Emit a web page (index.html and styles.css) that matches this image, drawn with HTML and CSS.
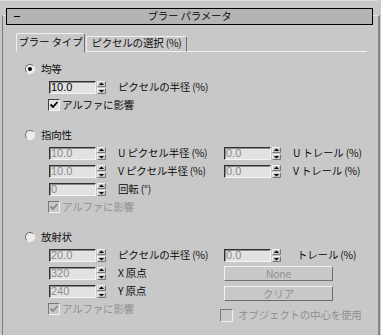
FILE: index.html
```html
<!DOCTYPE html>
<html lang="ja">
<head>
  <meta charset="UTF-8" />
  <title>ブラー パラメータ</title>
  <link rel="stylesheet" href="styles.css">
</head>
<body>

  <div class="top-edge"></div>

  <div class="rollout">
    <div class="rollout-title">
      <span class="collapse"></span>
      <span class="title-text">ブラー パラメータ</span>
    </div>

    <div class="tabs">
      <div class="tab active">ブラー タイプ</div>
      <div class="tab">ピクセルの選択 (%)</div>
      <div class="tab-fill"></div>
    </div>

    <div class="pane">

      <!-- 均等 -->
      <div class="section">
        <div class="radio-row"><span class="radio checked"></span>均等</div>
        <div class="row">
          <div class="col">
            <span class="field">10.0</span>
            <svg class="spin" width="9" height="13" viewBox="0 0 9 13"><path d="M.5 5.5V.5h8" stroke="#f4f4f4" fill="none"/><path d="M.5 5.5h8v-5" stroke="#777" fill="none"/><path d="M2 4h5L4.5 1.5z"/><path d="M.5 12.5v-5h8" stroke="#f4f4f4" fill="none"/><path d="M.5 12.5h8v-5" stroke="#777" fill="none"/><path d="M2 9h5l-2.5 2.5z"/></svg>
            <span class="lbl">ピクセルの半径 (%)</span>
          </div>
        </div>
        <div class="check-row">
          <div class="check-item">
            <span class="check"><svg width="10" height="10" viewBox="0 0 10 10"><path d="M1.5 4.5l2.5 2.5 4.5-5" stroke="#000" stroke-width="1.8" fill="none"/></svg></span>
            アルファに影響
          </div>
        </div>
      </div>

      <!-- 指向性 -->
      <div class="section">
        <div class="radio-row"><span class="radio"></span>指向性</div>
        <div class="row off">
          <div class="col">
            <span class="field">10.0</span>
            <svg class="spin" width="9" height="13" viewBox="0 0 9 13"><path d="M.5 5.5V.5h8" stroke="#f4f4f4" fill="none"/><path d="M.5 5.5h8v-5" stroke="#777" fill="none"/><path d="M2 4h5L4.5 1.5z"/><path d="M.5 12.5v-5h8" stroke="#f4f4f4" fill="none"/><path d="M.5 12.5h8v-5" stroke="#777" fill="none"/><path d="M2 9h5l-2.5 2.5z"/></svg>
            <span class="lbl">U ピクセル半径 (%)</span>
          </div>
          <div class="col">
            <span class="field">0.0</span>
            <svg class="spin" width="9" height="13" viewBox="0 0 9 13"><path d="M.5 5.5V.5h8" stroke="#f4f4f4" fill="none"/><path d="M.5 5.5h8v-5" stroke="#777" fill="none"/><path d="M2 4h5L4.5 1.5z"/><path d="M.5 12.5v-5h8" stroke="#f4f4f4" fill="none"/><path d="M.5 12.5h8v-5" stroke="#777" fill="none"/><path d="M2 9h5l-2.5 2.5z"/></svg>
            <span class="lbl">U トレール (%)</span>
          </div>
        </div>
        <div class="row off">
          <div class="col">
            <span class="field">10.0</span>
            <svg class="spin" width="9" height="13" viewBox="0 0 9 13"><path d="M.5 5.5V.5h8" stroke="#f4f4f4" fill="none"/><path d="M.5 5.5h8v-5" stroke="#777" fill="none"/><path d="M2 4h5L4.5 1.5z"/><path d="M.5 12.5v-5h8" stroke="#f4f4f4" fill="none"/><path d="M.5 12.5h8v-5" stroke="#777" fill="none"/><path d="M2 9h5l-2.5 2.5z"/></svg>
            <span class="lbl">V ピクセル半径 (%)</span>
          </div>
          <div class="col">
            <span class="field">0.0</span>
            <svg class="spin" width="9" height="13" viewBox="0 0 9 13"><path d="M.5 5.5V.5h8" stroke="#f4f4f4" fill="none"/><path d="M.5 5.5h8v-5" stroke="#777" fill="none"/><path d="M2 4h5L4.5 1.5z"/><path d="M.5 12.5v-5h8" stroke="#f4f4f4" fill="none"/><path d="M.5 12.5h8v-5" stroke="#777" fill="none"/><path d="M2 9h5l-2.5 2.5z"/></svg>
            <span class="lbl">V トレール (%)</span>
          </div>
        </div>
        <div class="row off">
          <div class="col">
            <span class="field">0</span>
            <svg class="spin" width="9" height="13" viewBox="0 0 9 13"><path d="M.5 5.5V.5h8" stroke="#f4f4f4" fill="none"/><path d="M.5 5.5h8v-5" stroke="#777" fill="none"/><path d="M2 4h5L4.5 1.5z"/><path d="M.5 12.5v-5h8" stroke="#f4f4f4" fill="none"/><path d="M.5 12.5h8v-5" stroke="#777" fill="none"/><path d="M2 9h5l-2.5 2.5z"/></svg>
            <span class="lbl">回転 (°)</span>
          </div>
        </div>
        <div class="check-row off">
          <div class="check-item">
            <span class="check"><svg width="10" height="10" viewBox="0 0 10 10"><path d="M1.5 4.5l2.5 2.5 4.5-5" stroke="#888" stroke-width="1.8" fill="none"/></svg></span>
            アルファに影響
          </div>
        </div>
      </div>

      <!-- 放射状 -->
      <div class="section">
        <div class="radio-row"><span class="radio"></span>放射状</div>
        <div class="row off">
          <div class="col">
            <span class="field">20.0</span>
            <svg class="spin" width="9" height="13" viewBox="0 0 9 13"><path d="M.5 5.5V.5h8" stroke="#f4f4f4" fill="none"/><path d="M.5 5.5h8v-5" stroke="#777" fill="none"/><path d="M2 4h5L4.5 1.5z"/><path d="M.5 12.5v-5h8" stroke="#f4f4f4" fill="none"/><path d="M.5 12.5h8v-5" stroke="#777" fill="none"/><path d="M2 9h5l-2.5 2.5z"/></svg>
            <span class="lbl">ピクセルの半径 (%)</span>
          </div>
          <div class="col">
            <span class="field">0.0</span>
            <svg class="spin" width="9" height="13" viewBox="0 0 9 13"><path d="M.5 5.5V.5h8" stroke="#f4f4f4" fill="none"/><path d="M.5 5.5h8v-5" stroke="#777" fill="none"/><path d="M2 4h5L4.5 1.5z"/><path d="M.5 12.5v-5h8" stroke="#f4f4f4" fill="none"/><path d="M.5 12.5h8v-5" stroke="#777" fill="none"/><path d="M2 9h5l-2.5 2.5z"/></svg>
            <span class="lbl trail">トレール (%)</span>
          </div>
        </div>
        <div class="row off">
          <div class="col">
            <span class="field">320</span>
            <svg class="spin" width="9" height="13" viewBox="0 0 9 13"><path d="M.5 5.5V.5h8" stroke="#f4f4f4" fill="none"/><path d="M.5 5.5h8v-5" stroke="#777" fill="none"/><path d="M2 4h5L4.5 1.5z"/><path d="M.5 12.5v-5h8" stroke="#f4f4f4" fill="none"/><path d="M.5 12.5h8v-5" stroke="#777" fill="none"/><path d="M2 9h5l-2.5 2.5z"/></svg>
            <span class="lbl">X 原点</span>
          </div>
          <div class="col">
            <span class="btn btn-none">None</span>
          </div>
        </div>
        <div class="row off">
          <div class="col">
            <span class="field">240</span>
            <svg class="spin" width="9" height="13" viewBox="0 0 9 13"><path d="M.5 5.5V.5h8" stroke="#f4f4f4" fill="none"/><path d="M.5 5.5h8v-5" stroke="#777" fill="none"/><path d="M2 4h5L4.5 1.5z"/><path d="M.5 12.5v-5h8" stroke="#f4f4f4" fill="none"/><path d="M.5 12.5h8v-5" stroke="#777" fill="none"/><path d="M2 9h5l-2.5 2.5z"/></svg>
            <span class="lbl">Y 原点</span>
          </div>
          <div class="col">
            <span class="btn btn-clear">クリア</span>
          </div>
        </div>
        <div class="check-row off">
          <div class="check-item">
            <span class="check"><svg width="10" height="10" viewBox="0 0 10 10"><path d="M1.5 4.5l2.5 2.5 4.5-5" stroke="#888" stroke-width="1.8" fill="none"/></svg></span>
            アルファに影響
          </div>
          <div class="check-item center-item">
            <span class="check big"></span>
            オブジェクトの中心を使用
          </div>
        </div>
      </div>

    </div>
  </div>

</body>
</html>
```

FILE: styles.css
```css
body {
  margin: 0;
  height: 335px;
  overflow: hidden;
  background: #c8c8c8;
  color: #000;
  font-family: "Noto Sans CJK JP", "Liberation Sans", sans-serif;
  font-size: 10.5px;
  font-weight: 350;
  letter-spacing: -0.2px;
}

.top-edge {
  height: 1px;
  margin-right: 3px;
  background: #dedede;
}

.rollout {
  height: 320px;
  margin: 14px 1px 0 2px;
  border-top: 1px solid #e6e6e6;
  border-left: 1px solid #7c7c7c;
  border-right: 2px solid #868686;
}

.rollout-title {
  display: flex;
  align-items: center;
  height: 15px;
  margin: -8px 5px 0 3px;
  border: 1px solid #000;
  background: #b4b4b4;
}

.collapse {
  width: 6px;
  height: 1px;
  margin-left: 7px;
  background: #000;
}

.title-text {
  flex: 1;
  margin-right: 13px;
  text-align: center;
  line-height: 1;
}

/* tabs */
.tabs {
  display: flex;
  align-items: flex-end;
  height: 19px;
  margin: 8px 11px 0 13px;
}

.tab {
  box-sizing: border-box;
  display: flex;
  align-items: center;
  justify-content: center;
  flex: none;
  height: 16px;
  width: 101px;
  margin-left: 1px;
  padding-bottom: 1px;
  border: 1px solid #f0f0f0;
  border-right-color: #707070;
  border-radius: 2px 2px 0 0;
  line-height: 1;
  white-space: nowrap;
}

.tab.active {
  height: 19px;
  width: 69px;
  margin-left: 0;
  padding-bottom: 2px;
  border-bottom: 0;
}

.tab-fill {
  flex: 1;
  height: 1px;
  background: #f0f0f0;
}

/* pane */
.pane {
  padding: 11px 0 0 22px;
}

.section + .section {
  margin-top: 19px;
}

.radio-row {
  display: flex;
  align-items: center;
  gap: 6px;
  height: 12px;
  margin-bottom: 6px;
  line-height: 1;
}

.radio {
  box-sizing: border-box;
  position: relative;
  width: 10px;
  height: 10px;
  border-radius: 50%;
  border: 1px solid;
  border-color: #707070 #f4f4f4 #f4f4f4 #707070;
  background: #ececec;
}

.radio.checked::after {
  content: "";
  position: absolute;
  left: 2px;
  top: 2px;
  width: 4px;
  height: 4px;
  border-radius: 50%;
  background: #000;
}

.row {
  display: flex;
  align-items: center;
  height: 13px;
  margin: 0 0 5px 24px;
}

.col {
  display: flex;
  align-items: center;
  flex: none;
  width: 175px;
  height: 13px;
}

.field {
  box-sizing: border-box;
  flex: none;
  width: 47px;
  height: 13px;
  padding-left: 1px;
  border: 1px solid;
  border-color: #303030 #f4f4f4 #f4f4f4 #303030;
  box-shadow: inset 1px 1px 0 #8a8a8a;
  background: #e2e2e2;
  font-family: "Liberation Sans", sans-serif;
  font-size: 11px;
  font-weight: 400;
  letter-spacing: 0;
  line-height: 11px;
}

.spin {
  display: block;
  flex: none;
  margin-left: 1px;
}

.lbl {
  margin-left: 12px;
  white-space: nowrap;
  line-height: 1;
}

.trail {
  margin-left: 16px;
}

.off .field,
.off .btn {
  color: #8c8c8c;
}

.btn {
  box-sizing: border-box;
  flex: none;
  width: 109px;
  height: 15px;
  border: 1px solid;
  border-color: #f0f0f0 #6e6e6e #6e6e6e #f0f0f0;
  text-align: center;
  line-height: 13px;
}

.btn-none {
  margin-top: -1px;
}

.btn-clear {
  margin-top: 3px;
}

.check-row {
  display: flex;
  align-items: flex-start;
  height: 11px;
  margin: 1px 0 0 23px;
}

.check-item {
  display: flex;
  align-items: center;
  flex: none;
  gap: 2px;
  width: 172px;
  height: 12px;
  line-height: 1;
  white-space: nowrap;
}

.off .check-item {
  color: #8c8c8c;
}

.check {
  box-sizing: border-box;
  display: flex;
  align-items: center;
  justify-content: center;
  flex: none;
  width: 12px;
  height: 12px;
  border: 1px solid;
  border-color: #404040 #f4f4f4 #f4f4f4 #404040;
  background: #e4e4e4;
}

.off .check {
  border-color: #7a7a7a #f0f0f0 #f0f0f0 #7a7a7a;
  background: #c8c8c8;
}

.center-item {
  gap: 5px;
  margin-top: 6px;
  height: 13px;
}

.check.big {
  width: 13px;
  height: 13px;
}
```
